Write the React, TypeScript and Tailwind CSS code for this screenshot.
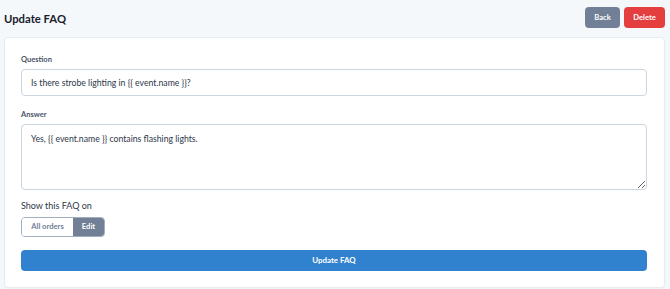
import { useState } from "react";

export default function App() {
  const [scope, setScope] = useState<"all" | "edit">("edit");

  return (
    <div className="min-h-[289px] w-[670px] bg-[#f5f8fb] px-1 font-['Lato',sans-serif] text-[#2d3748]">
      <header className="flex h-[37px] items-center justify-between">
        <h1 className="pt-px text-[11.3px] font-bold text-[#1a202c]">Update FAQ</h1>
        <div className="flex gap-[4px] pr-[1px] pb-[2px]">
          <button
            type="button"
            className="h-[21px] w-[35px] rounded-[4px] bg-[#718096] text-[7.6px] font-bold text-white"
          >
            Back
          </button>
          <button
            type="button"
            className="h-[21px] w-[41px] rounded-[4px] bg-[#e53e3e] text-[7.6px] font-bold text-white"
          >
            Delete
          </button>
        </div>
      </header>

      <main className="mr-[1px] rounded-[4px] border border-[#e7ecf1] bg-white px-4 pb-[16px] pt-[17px] shadow-[0_1px_2px_rgba(0,0,0,0.03)]">
        <label className="block">
          <span className="block text-[7.5px] font-bold leading-[10px] text-[#4a5568]">Question</span>
          <input
            defaultValue="Is there strobe lighting in {{ event.name }}?"
            className="mt-[4px] block h-[27px] w-[626px] rounded-[4px] border border-[#cbd5e0] bg-white px-[9px] text-[8.7px] text-[#2d3748] outline-none"
          />
        </label>

        <label className="mt-[14px] block">
          <span className="block text-[7.5px] font-bold leading-[10px] text-[#4a5568]">Answer</span>
          <textarea
            defaultValue="Yes, {{ event.name }} contains flashing lights."
            className="mt-[4px] block h-[66px] w-[626px] resize-y rounded-[4px] border border-[#cbd5e0] bg-white px-[9px] py-[8px] text-[8.7px] leading-[11px] text-[#2d3748] outline-none"
          />
        </label>

        <p className="mt-[9px] text-[9px] leading-[14px] text-[#2d3748]">Show this FAQ on</p>
        <div className="mt-[4px] flex h-[20px] w-[84px] overflow-hidden rounded-[4px] border border-[#a0aec0]">
          <button
            type="button"
            onClick={() => setScope("all")}
            className={
              scope === "all"
                ? "w-[51px] bg-[#718096] text-[7.6px] font-bold text-white"
                : "w-[51px] bg-white text-[7.6px] font-bold text-[#718096]"
            }
          >
            All orders
          </button>
          <button
            type="button"
            onClick={() => setScope("edit")}
            className={
              scope === "edit"
                ? "flex-1 bg-[#718096] text-[7.6px] font-bold text-white"
                : "flex-1 bg-white text-[7.6px] font-bold text-[#718096]"
            }
          >
            Edit
          </button>
        </div>

        <button
          type="button"
          className="mt-[13px] block h-[21px] w-[626px] rounded-[4px] bg-[#3182ce] text-[7.9px] font-bold text-white"
        >
          Update FAQ
        </button>
      </main>
    </div>
  );
}
